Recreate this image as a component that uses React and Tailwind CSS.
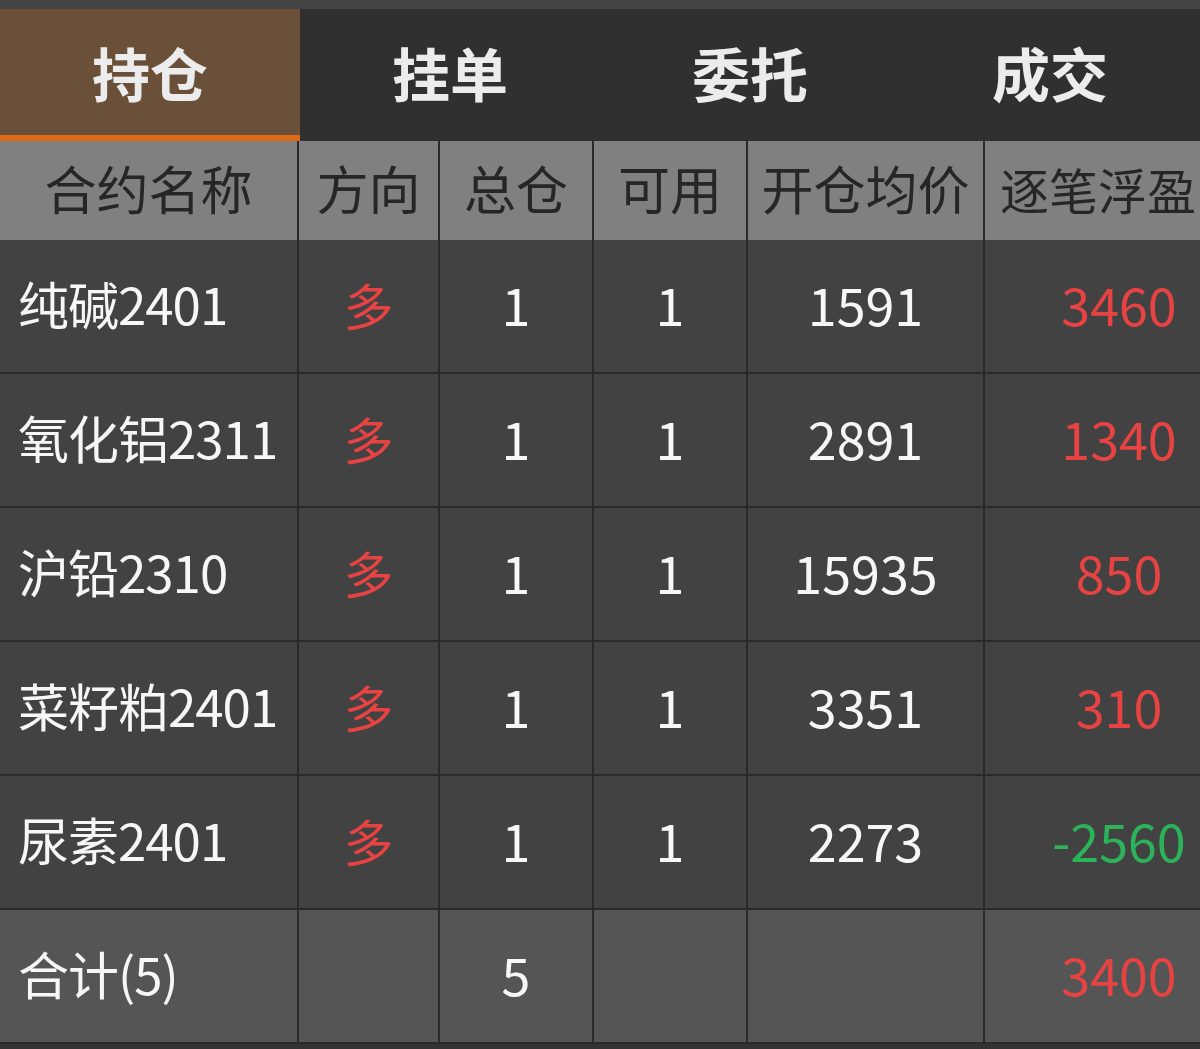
import React from 'react';

const tabs = ['持仓', '挂单', '委托', '成交'];

const headers = ['合约名称', '方向', '总仓', '可用', '开仓均价'];

const rows = [
    { name: '纯碱2401', dir: '多', total: 1, avail: 1, price: 1591, pnl: 3460 },
    { name: '氧化铝2311', dir: '多', total: 1, avail: 1, price: 2891, pnl: 1340 },
    { name: '沪铅2310', dir: '多', total: 1, avail: 1, price: 15935, pnl: 850 },
    { name: '菜籽粕2401', dir: '多', total: 1, avail: 1, price: 3351, pnl: 310 },
    { name: '尿素2401', dir: '多', total: 1, avail: 1, price: 2273, pnl: -2560 },
];

const cols = 'grid grid-cols-[299px_141px_154px_154px_237px_270px] w-[1255px]';
const cell = 'flex items-center justify-center pb-[5px] border-r-2 border-b-2 border-[#2a2a2a]';
const nameCell = 'flex items-center pl-[18px] pb-[5px] border-r-2 border-b-2 border-[#2a2a2a]';

export default function App() {
    return (
        <div
            className="w-[1200px] h-[1049px] overflow-hidden bg-[#333333]"
            style={{ fontFamily: '"Noto Sans CJK SC", "Noto Sans", sans-serif' }}
        >
            <div className="h-[9px] bg-[#444444]" />

            {/* Tabs */}
            <div className="grid grid-cols-4 h-[132px] bg-[#303030]">
                {tabs.map((t, i) => (
                    <div
                        key={t}
                        className={
                            i === 0
                                ? 'flex items-center justify-center bg-[#6b5039] border-b-[6px] border-[#dd6a14]'
                                : 'flex items-center justify-center pb-[6px]'
                        }
                    >
                        <span className="text-[58px] font-bold text-[#ececec] leading-none">{t}</span>
                    </div>
                ))}
            </div>

            {/* Header */}
            <div className={`${cols} h-[99px] bg-[#808080]`}>
                {headers.map((h) => (
                    <div key={h} className="flex items-center justify-center pb-[5px] border-r-2 border-[#2a2a2a]">
                        <span className="text-[52px] text-[#262626] leading-none whitespace-nowrap">{h}</span>
                    </div>
                ))}
                <div className="flex items-center pl-[15px] pb-[5px]">
                    <span className="text-[49px] text-[#262626] leading-none whitespace-nowrap">逐笔浮盈</span>
                </div>
            </div>

            {/* Rows */}
            {rows.map((r) => (
                <div key={r.name} className={`${cols} h-[134px] bg-[#424242]`}>
                    <div className={nameCell}>
                        <span className="text-[51px] tracking-[-1px] text-[#f7f7f7] leading-none whitespace-nowrap">{r.name}</span>
                    </div>
                    <div className={cell}>
                        <span className="text-[50px] text-[#e84343] leading-none">{r.dir}</span>
                    </div>
                    <div className={cell}>
                        <span className="text-[52px] text-[#f7f7f7] leading-none">{r.total}</span>
                    </div>
                    <div className={cell}>
                        <span className="text-[52px] text-[#f7f7f7] leading-none">{r.avail}</span>
                    </div>
                    <div className={cell}>
                        <span className="text-[52px] text-[#f7f7f7] leading-none">{r.price}</span>
                    </div>
                    <div className={cell}>
                        <span
                            className={
                                r.pnl < 0
                                    ? 'text-[52px] text-[#2cb35a] leading-none'
                                    : 'text-[52px] text-[#e84343] leading-none'
                            }
                        >
                            {r.pnl}
                        </span>
                    </div>
                </div>
            ))}

            {/* Total */}
            <div className={`${cols} h-[134px] bg-[#555555]`}>
                <div className={nameCell}>
                    <span className="text-[51px] tracking-[-1px] text-[#f7f7f7] leading-none whitespace-nowrap">合计(5)</span>
                </div>
                <div className={cell} />
                <div className={cell}>
                    <span className="text-[52px] text-[#f7f7f7] leading-none">5</span>
                </div>
                <div className={cell} />
                <div className={cell} />
                <div className={cell}>
                    <span className="text-[52px] text-[#e84343] leading-none">3400</span>
                </div>
            </div>
        </div>
    );
}
